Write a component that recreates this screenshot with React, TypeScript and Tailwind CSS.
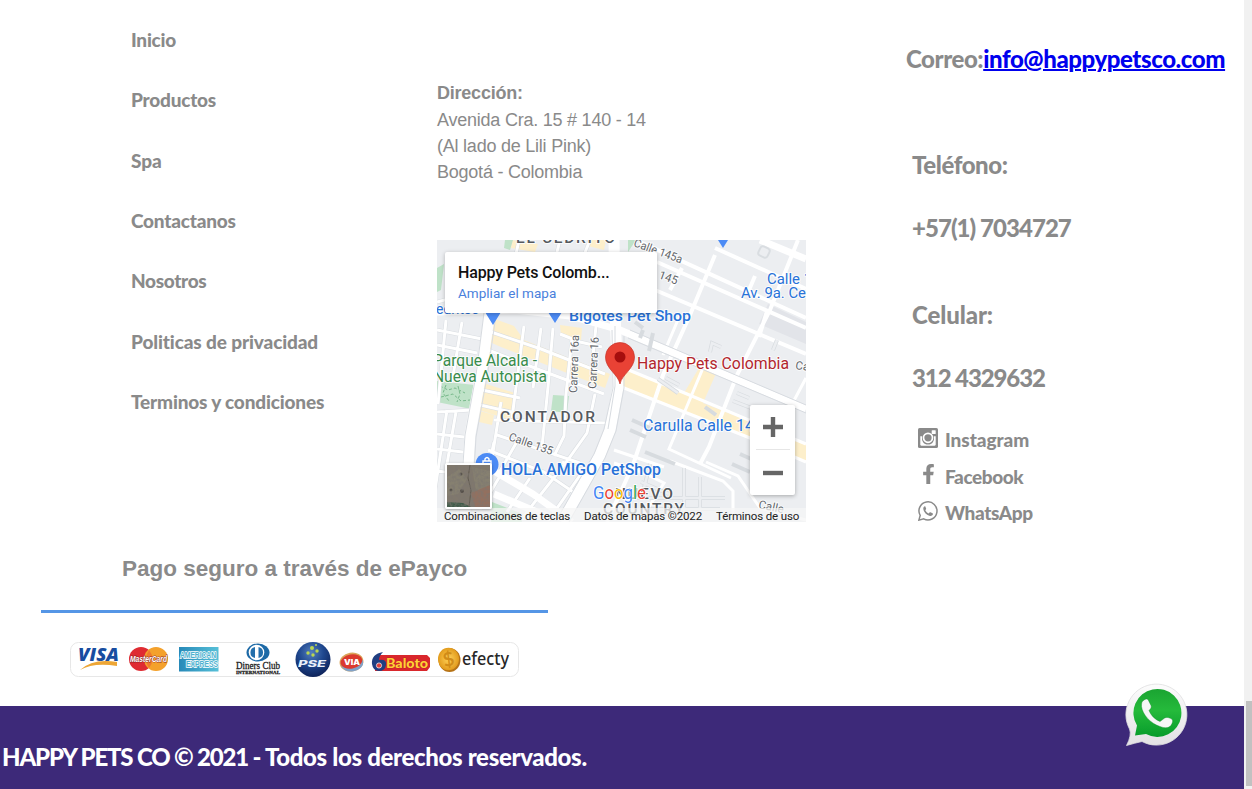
import React from "react";
import { FaFacebookF } from "react-icons/fa";

const links: { label: string; fit: string }[] = [
  { label: "Inicio", fit: "tracking-[-0.25px]" },
  { label: "Productos", fit: "tracking-[-0.22px]" },
  { label: "Spa", fit: "tracking-[-0.1px]" },
  { label: "Contactanos", fit: "tracking-[-0.22px]" },
  { label: "Nosotros", fit: "tracking-[-0.33px]" },
  { label: "Politicas de privacidad", fit: "tracking-[-0.12px]" },
  { label: "Terminos y condiciones", fit: "tracking-[-0.17px]" },
];

function InstagramIcon() {
  return (
    <svg viewBox="0 0 20 20" className="size-5" fill="none">
      <rect width="20" height="20" rx="1.6" fill="#8a8a8a" />
      <path d="M2.3 8.2v8.4c0 .7.4 1.1 1.1 1.1h13.2c.7 0 1.1-.4 1.1-1.1V8.2h-2.2a6 6 0 1 1-11 0z" fill="#fff" />
      <circle cx="10" cy="9.8" r="5.8" fill="#8a8a8a" />
      <circle cx="10" cy="9.8" r="4.5" stroke="#fff" strokeWidth="1.7" />
      <rect x="13.7" y="2.2" width="4" height="3.8" rx=".6" fill="#fff" />
    </svg>
  );
}

const handset =
  "M6.6 5.2c-.9.5-1.4 1.4-1.3 2.6.3 3.4 3.6 6.6 6.7 7.1 1.4.2 2.5-.5 2.9-1.7.1-.5 0-.8-.4-1l-2-.9c-.4-.2-.7-.1-1 .3l-.7.9c-1.5-.6-2.8-1.8-3.5-3.3l.7-.9c.2-.3.2-.6.1-.9l-.8-1.8c-.1-.4-.4-.5-.7-.4z";

function WhatsAppIcon() {
  return (
    <svg viewBox="0 0 20 20" className="size-5" fill="none">
      <path d="M.9 19.1l1.3-4.7a9 9 0 1 1 3.5 3.4z" stroke="#8a8a8a" strokeWidth="1.5" />
      <path d={handset} fill="#8a8a8a" />
    </svg>
  );
}

function StreetMap() {
  return (
    <svg viewBox="437 240 369 282" className="block h-full w-full" fontFamily="Roboto, sans-serif">
      <rect x="437" y="240" width="369" height="282" fill="#eceef1" />
      <g fill="#fdefcb">
        <path d="M492 318l22 8 10 14 86 34-5 14-104-41-16-7zM482 330l9 2 0 26-12-2zM483 383l32 10-5 27-31-10zM480 411l14 4-2 10-13-3zM512 240l26 4-3 8-24-4zM590 240l16 0-2 10-16-4zM560 325l22 3-1 12-20-4z" />
        <path d="M620 366l64 27 18-30 16 6-15 34 103 41v18l-122-50-66-25z" />
      </g>
      <path d="M437 268l7-4-3 26-4 2zM437 381l38 4-4 24-34-7zM553 395l16 1-2 17-16-2zM505 240h8l-3 10-6-2zM628 240h8l-8 12zM492 502l28 11 2 9h-31z" fill="#bfe2c8" />
      <path d="M440 386l8 4 7-2 10 5M441 397l12-3 8 7 9-1M446 385l-3 8 6 8M458 386l2 8-3 8" stroke="#78b98b" fill="none" strokeDasharray="3 2" />
      <path d="M768 304l38 18v22l-47-20z" fill="#e2e4e9" />
      <g stroke="#d9dde1" strokeWidth="4" fill="none">
        <path d="M437 330l45 9M446 320l-8 84M462 322l-10 60M437 345l40 8M491 332l50 17 64 25M488 350l52 20 64 24M524 326l-12 92M541 328l-8 60M553 328l-5 59-6 60M572 338l-6 56-2 42-10 20M560 334l20 8 22 5M596 326l-3 30M595 394l-8 39-20 28-44 56M482 390l38 8M480 405l36 8M519 240l-3 14M560 240l-4 16M590 240l-6 15M494 420l112 3M501 402l-9 56M497 435l83 28M494 442l-6 28M488 450l56 22 38 26M519 438l-20 35M562 462l21 9-35 50M437 412l35-2M447 410l-12 80M456 412l-9 52M437 434l36 4M437 449l34 4M437 471l30 4M500 476l-20 34M530 478l-23 34M437 302l15-4 0-40" />
      </g>
      <g stroke="#fff" strokeWidth="3" fill="none">
        <path d="M437 330l45 9M446 320l-8 84M462 322l-10 60M437 345l40 8M491 332l50 17 64 25M488 350l52 20 64 24M524 326l-12 92M541 328l-8 60M553 328l-5 59-6 60M572 338l-6 56-2 42-10 20M560 334l20 8 22 5M596 326l-3 30M595 394l-8 39-20 28-44 56M482 390l38 8M480 405l36 8M519 240l-3 14M560 240l-4 16M590 240l-6 15M494 420l112 3M501 402l-9 56M497 435l83 28M494 442l-6 28M488 450l56 22 38 26M519 438l-20 35M562 462l21 9-35 50M437 412l35-2M447 410l-12 80M456 412l-9 52M437 434l36 4M437 449l34 4M437 471l30 4M500 476l-20 34M530 478l-23 34M437 302l15-4 0-40" />
      </g>
      <g stroke="#fff" strokeWidth="4" fill="none">
        <path d="M657 262l149 66M640 242l166 76M655 290l151 64M715 248l91 41M798 240l-28 70-33 65-28 72-9 17M715 255l-25 60-27 60-30 90-26 57M682 268l-12 22M755 276l-6 14M767 311l-8 26" />
        <path d="M614 384l136 54 56 24M619 366l68 28 119 50M703 368l-34 81 30 14 32 15M614 450l50 17M680 315l-17 40M806 378l-24 45M614 463l30 10 20 10-24 38M670 461l53 20 10 10v29M706 462l32 14 22 32 46 12" strokeWidth="3" />
      </g>
      <g fill="none" stroke="#fff" strokeLinejoin="round">
        <path d="M490 310l-9 64-11 60-6 88" strokeWidth="11" />
        <path d="M437 312l78-2 55 6 50 14 186 79" strokeWidth="7" />
        <path d="M614 240l1 72 3 75-8 43-10 25-38 67" strokeWidth="11" />
        <path d="M760 240l46 19M489 468l44 26 39 28M494 494l55 23" strokeWidth="7" />
      </g>
      <g fill="none" stroke="#d7dbe0">
        <path d="M484 313l-8 62-11 60-6 86M496 315l-9 62-11 60-5 85M612 330l1 58-9 41-10 25-38 67M624 336l0 52-8 43-11 27-36 64M630 330l176 75M628 338l178 75" />
        <path d="M615 326l0 60-7 43" />
      </g>
      <g stroke="#d7dbdf" strokeWidth="4" fill="none">
        <path d="M658 379l20 14M666 378l13 7M635 322l8 6M640 338l3-8M710 352l2-9 9 4M773 350l4-10M653 333l-4 18M632 420l18 8M630 430l16 7M705 407l11 8M733 401l34 13M737 393l12 5M645 452l30 12M641 482l28 12M650 464l-8 32M684 468v50M700 477v41M637 498h88M650 509h70M732 464l18 8M740 454l18 8" />
      </g>
      <path d="M658 379l20 14M666 378l13 7M710 352l2-9 9 4M773 350l4-10M733 401l34 13M737 393l12 5M641 482l28 12M650 464l-8 32M684 468v50M700 477v41M637 498h88M650 509h70" stroke="#eceef1" strokeWidth="2.6" fill="none" />
      <rect x="759" y="247" width="10" height="10" rx="3" transform="rotate(25 764 252)" fill="none" stroke="#d9dde1" strokeWidth="2" />
      <g fill="#4c8bf5">
        <path d="M485 312h16l-8 13zM548 312h14l-7 11zM718 240h10l-5 8z" />
        <circle cx="487" cy="464.500" r="11.5" />
      </g>
      <path d="M483 461h8v8h-8zM485 461v-2q2-3 4 0v2" fill="none" stroke="#fff" strokeWidth="1.4" />
      <g stroke="#fff" strokeWidth="2" strokeOpacity=".8" paintOrder="stroke" strokeLinejoin="round">
        <g fill="#62666b" fontSize="11.5">
          <text x="633" y="246" transform="rotate(20 633 246)" textLength="51" lengthAdjust="spacingAndGlyphs">Calle 145a</text>
          <text x="658" y="278" transform="rotate(20 658 278)">145</text>
          <text x="577" y="393" transform="rotate(-88 577 393)" textLength="58" lengthAdjust="spacingAndGlyphs">Carrera 16a</text>
          <text x="596" y="389" transform="rotate(-87 596 389)" textLength="52" lengthAdjust="spacingAndGlyphs">Carrera 16</text>
          <text x="508" y="440" transform="rotate(19 508 440)" textLength="46" lengthAdjust="spacingAndGlyphs">Calle 135</text>
          <text x="758" y="508" transform="rotate(12 758 508)">Calle</text>
          <text x="795" y="369" transform="rotate(8 795 369)">Ca</text>
        </g>
        <g fill="#55595e" fontSize="15.500" fontWeight="500">
          <text x="516" y="243" textLength="99">EL CEDRITO</text>
          <text x="500" y="422" textLength="95">CONTADOR</text>
          <text x="615" y="499" textLength="58">NUEVO</text>
          <text x="603" y="514" textLength="81">COUNTRY</text>
        </g>
        <g fill="#2872d8" fontSize="15.500">
          <text x="767" y="284" fontSize="14.500" textLength="45" lengthAdjust="spacingAndGlyphs">Calle 1</text>
          <text x="741" y="298" fontSize="14.500" textLength="65" lengthAdjust="spacingAndGlyphs">Av. 9a. Ce</text>
          <text x="436" y="314" textLength="43" lengthAdjust="spacingAndGlyphs">edritos</text>
          <text x="569" y="321" fontWeight="500" textLength="122" lengthAdjust="spacingAndGlyphs">Bigotes Pet Shop</text>
          <text x="643" y="431" fontSize="16" textLength="111" lengthAdjust="spacingAndGlyphs">Carulla Calle 14</text>
          <text x="501" y="475" fontSize="16" fontWeight="500" textLength="160" lengthAdjust="spacingAndGlyphs">HOLA AMIGO PetShop</text>
        </g>
        <g fill="#398c4c" fontSize="16">
          <text x="433" y="366" textLength="104" lengthAdjust="spacingAndGlyphs">Parque Alcala -</text>
          <text x="433" y="382" textLength="114" lengthAdjust="spacingAndGlyphs">Nueva Autopista</text>
        </g>
        <text x="637" y="369" fill="#b3262d" fontSize="16.500" textLength="152" lengthAdjust="spacingAndGlyphs">Happy Pets Colombia</text>
      </g>
      <path d="M620 384c-2-10-14.500-15-14.500-27a14.500 14.500 0 0 1 29 0c0 12-12.500 17-14.500 27z" fill="#e94235" stroke="#c5362c" strokeWidth=".7" />
      <circle cx="620" cy="357" r="5.5" fill="#a50e0e" />
      <text x="593" y="499" fontSize="17.500" stroke="#fff" strokeWidth="1.6" paintOrder="stroke" textLength="53" lengthAdjust="spacingAndGlyphs">
        <tspan fill="#4285f4">G</tspan><tspan fill="#ea4335">o</tspan><tspan fill="#fbbc05">o</tspan><tspan fill="#4285f4">g</tspan><tspan fill="#34a853">l</tspan><tspan fill="#ea4335">e</tspan>
      </text>
    </svg>
  );
}

function SatelliteThumb() {
  return (
    <svg viewBox="0 0 43 42" className="block h-full w-full">
      <defs>
        <filter id="ground" x="0" y="0" width="1" height="1">
          <feTurbulence type="fractalNoise" baseFrequency=".35" numOctaves="3" seed="4" />
          <feColorMatrix values="0 0 0 0 .2  0 0 0 0 .18  0 0 0 0 .16  1.6 0 0 0 -.55" />
        </filter>
      </defs>
      <rect width="43" height="42" fill="#80786d" />
      <path d="M0 12l12-8 8 10-9 15-11 2zM25 2l18 4v16l-14 4z" fill="#868070" />
      <path d="M24 28l19-8v22H28z" fill="#93705f" />
      <path d="M0 37l16 1 8 4H0z" fill="#3f5b49" />
      <path d="M23 0l-2 13 3 12-2 17" stroke="#5f594f" fill="none" />
      <g fill="#55504a"><circle cx="14" cy="9" r="1.5" /><circle cx="15" cy="26" r="2" /><circle cx="4" cy="25" r="1.5" /></g>
      <rect width="43" height="42" filter="url(#ground)" />
    </svg>
  );
}

function MapCard() {
  return (
    <div className="relative h-[282px] w-[369px] overflow-hidden font-['Roboto',sans-serif]">
      <StreetMap />
      <div className="absolute top-[12px] left-[8px] h-[61px] w-[212px] rounded-[2px] bg-white pt-[10px] pl-[13px] shadow-[0_1px_4px_rgba(0,0,0,0.25)]">
        <div className="text-[16px] leading-[22px] font-medium tracking-[-0.17px] text-[#111]">Happy Pets Colomb...</div>
        <div className="text-[13.5px] leading-[19px] tracking-[0.02px] text-[#4a7fdc]">Ampliar el mapa</div>
      </div>
      <div className="absolute top-[165px] left-[313px] flex h-[90px] w-[45px] flex-col items-center rounded-[2px] bg-white shadow-[0_1px_4px_rgba(0,0,0,0.3)]">
        <div className="flex h-[44px] items-center">
          <svg viewBox="0 0 20 20" className="size-5"><path d="M10 0v20M0 10h20" stroke="#666" strokeWidth="4.4" /></svg>
        </div>
        <div className="h-px w-[34px] bg-[#e6e6e6]" />
        <div className="flex h-[46px] items-center">
          <svg viewBox="0 0 20 20" className="size-5"><path d="M0 10h20" stroke="#666" strokeWidth="4.4" /></svg>
        </div>
      </div>
      <div className="absolute bottom-0 left-0 flex h-[14px] w-full items-center gap-[13px] bg-[#f5f5f5]/75 pt-px pl-[7px] text-[11.5px] leading-[14px] whitespace-nowrap text-[#222]">
        <span className="w-[127px] tracking-[-0.12px]">Combinaciones de teclas</span>
        <span className="w-[119px] tracking-[-0.15px]">Datos de mapas ©2022</span>
        <span className="tracking-[-0.13px]">Términos de uso</span>
      </div>
      <div className="absolute top-[223px] left-[8px] h-[46px] w-[47px] rounded-[2px] border-2 border-white shadow-[0_1px_3px_rgba(0,0,0,0.35)]">
        <SatelliteThumb />
      </div>
    </div>
  );
}

function PaymentLogos() {
  return (
    <svg viewBox="70 642 449 35" className="block h-[35px] w-[449px]">
      <defs>
        <linearGradient id="amex" x1="0" x2="1"><stop stopColor="#2789b8" /><stop offset="1" stopColor="#57c0d8" /></linearGradient>
        <radialGradient id="pse" cx=".45" cy=".3" r=".7"><stop stopColor="#547fbd" /><stop offset=".5" stopColor="#1f488f" /><stop offset="1" stopColor="#0e235a" /></radialGradient>
        <radialGradient id="coin"><stop stopColor="#ffd259" /><stop offset="1" stopColor="#e29b1c" /></radialGradient>
      </defs>
      <rect x="70.5" y="642.5" width="448" height="34" rx="8" fill="#fff" stroke="#e7e7e7" />
      <text x="78" y="661" fontFamily="Open Sans, sans-serif" fontSize="18" fontWeight="800" fontStyle="italic" fill="#184da0" textLength="41" lengthAdjust="spacingAndGlyphs">VISA</text>
      <path d="M80 670q13-12 37-8v4q-23-4-37 4z" fill="#eda635" />
      <circle cx="141" cy="659" r="12" fill="#df2b32" />
      <circle cx="156" cy="659" r="12" fill="#f4a12c" />
      <path d="M149 650q7 9 0 18-6-9 0-18z" fill="#ef7a2d" />
      <text x="130" y="662" fontFamily="Liberation Sans, sans-serif" fontSize="8.500" fontWeight="700" fontStyle="italic" fill="#fff" stroke="#8c2625" strokeWidth=".9" paintOrder="stroke" textLength="37" lengthAdjust="spacingAndGlyphs">MasterCard</text>
      <rect x="179" y="647" width="39.5" height="24.5" fill="url(#amex)" />
      <g fontFamily="Liberation Sans, sans-serif" fontSize="8.500" fontWeight="700" fill="#4bb1cf" stroke="#fff" strokeWidth="1.4" paintOrder="stroke">
        <text x="180" y="658" textLength="36" lengthAdjust="spacingAndGlyphs">AMERICAN</text>
        <text x="186" y="667" textLength="32" lengthAdjust="spacingAndGlyphs">EXPRESS</text>
      </g>
      <ellipse cx="258" cy="652.5" rx="11.5" ry="9" fill="#1c69a6" />
      <circle cx="256.5" cy="652.5" r="7.8" fill="#fff" />
      <path d="M255 647v11a5.6 5.6 0 0 1 0-11zm3.5 0v11a5.6 5.6 0 0 0 0-11z" fill="#246fab" />
      <text x="236" y="669" fontFamily="Liberation Serif, serif" fontSize="10" fill="#222" stroke="#222" strokeWidth=".3" textLength="44" lengthAdjust="spacingAndGlyphs">Diners Club</text>
      <text x="236" y="674" fontFamily="Liberation Serif, serif" fontSize="5" fontWeight="700" fill="#222" stroke="#222" strokeWidth=".3" textLength="44">INTERNATIONAL</text>
      <circle cx="313" cy="659.5" r="17.5" fill="url(#pse)" />
      <g fill="#b9d651"><circle cx="312" cy="648" r="2" /><circle cx="308" cy="653" r="1.7" /><circle cx="317" cy="651" r="1.7" /><circle cx="313" cy="655" r="1.7" /><circle cx="316" cy="645" r="1" /></g>
      <text x="298" y="667" fontFamily="Inter, sans-serif" fontSize="9.5" fontWeight="800" fontStyle="italic" fill="#e8eff9" textLength="28" lengthAdjust="spacingAndGlyphs">PSE</text>
      <g transform="rotate(-10 351.500 662)">
        <ellipse cx="351.500" cy="662" rx="12" ry="9.500" fill="#dba65a" />
        <ellipse cx="352" cy="664" rx="11" ry="7.500" fill="#81a2c7" />
        <ellipse cx="351.500" cy="661.500" rx="11" ry="7" fill="#db3a2e" />
      </g>
      <text x="344" y="665" fontFamily="Inter, sans-serif" fontSize="7.500" fontWeight="900" fill="#fff" textLength="16" lengthAdjust="spacingAndGlyphs">VIA</text>
      <path d="M376 655h51l3 3v9l-3 4h-52z" fill="#d9272c" />
      <path d="M383 652q-12 2-11 12 1 7 7 7t7-6-7-5q0-4 4-8z" fill="#203f81" />
      <circle cx="379" cy="665.500" r="2.600" fill="#dc403c" stroke="#fff" strokeWidth=".7" />
      <text x="386" y="668" fontFamily="Lato, sans-serif" fontSize="13.500" fontWeight="900" fill="#ffd035" stroke="#a41e22" strokeWidth=".5" paintOrder="stroke" textLength="42" lengthAdjust="spacingAndGlyphs">Baloto</text>
      <ellipse cx="449.500" cy="660" rx="11" ry="12" fill="#b67317" />
      <ellipse cx="448.500" cy="659" rx="10.500" ry="11.300" fill="url(#coin)" />
      <text x="443" y="666" fontFamily="Lato, sans-serif" fontSize="19" fontWeight="700" fill="#d18c17" transform="rotate(-12 449 660)">$</text>
      <text x="462" y="665" fontFamily="Noto Sans, sans-serif" fontSize="18" fontWeight="500" fill="#272727" textLength="47" lengthAdjust="spacingAndGlyphs">efecty</text>
    </svg>
  );
}

function WhatsAppBubble() {
  return (
    <svg viewBox="0 0 66 66" className="h-[66px] w-[66px]">
      <defs>
        <linearGradient id="bubble" x1="0" y1="0" x2="0" y2="1"><stop stopColor="#fcfcfc" /><stop offset="1" stopColor="#e3e1e5" /></linearGradient>
        <linearGradient id="leaf" x1="0" y1="0" x2="0" y2="1"><stop stopColor="#1ba432" /><stop offset=".45" stopColor="#25ba3b" /><stop offset="1" stopColor="#079c2b" /></linearGradient>
      </defs>
      <path d="M3.500 63.500Q9 53 6.500 47A30.500 30.500 0 1 1 19 59.500Q12 61 3.500 63.500z" fill="url(#bubble)" stroke="#dededf" strokeWidth=".8" strokeLinejoin="round" />
      <path d="M12 53.500l2-10a24 24 0 1 1 9 8.500z" fill="url(#leaf)" />
      <path d="M20.500 18.500c2-2 4-2 5 0l2.500 5c1 2-1 4-2 5 2 5 6 9 11 11l4-3c1-1 2-1 4-1l3 1c2 1 2 3 1 5-2 5-7 5-12 3-9.500-3-17.500-12-18.500-20 0-3 0-5 2-6z" fill="#f7f7f7" stroke="#138b2c" strokeOpacity=".4" />
    </svg>
  );
}

export default function App() {
  return (
    <div className="flex h-[789px] w-[1252px] overflow-hidden bg-white text-[#8a8a8a]">
      <div className="relative flex w-[1244px] flex-col">
        <main className="h-[706px]">
          <section className="flex h-[541px]">
            <nav className="flex w-[437px] flex-col gap-[36.45px] pt-[27.7px] pl-[131px] font-['Lato',sans-serif] text-[19px] leading-6 font-black whitespace-nowrap">
              {links.map((l) => (
                <a key={l.label} className={l.fit}>{l.label}</a>
              ))}
            </nav>
            <div className="w-[469px] pt-[80px] font-['Liberation_Sans',sans-serif] text-[18px] leading-[26.2px] tracking-[-0.23px]">
              <p className="pb-[0.6px] font-bold">Dirección:</p>
              <p>Avenida Cra. 15 # 140 - 14</p>
              <p>(Al lado de Lili Pink)</p>
              <p>Bogotá - Colombia</p>
              <div className="pt-[55px] tracking-normal"><MapCard /></div>
            </div>
            <div className="pt-[43px] font-['Lato',sans-serif] text-[24px] leading-8 font-black whitespace-nowrap">
              <p className="tracking-[-0.43px]">Correo:<a className="text-[#0000ee] underline decoration-2">info@happypetsco.com</a></p>
              <div className="pt-[74px] pl-[6px]">
                <p className="tracking-[-0.4px]">Teléfono:</p>
                <p className="pt-[31px] tracking-[-0.95px]">+57(1) 7034727</p>
                <p className="pt-[55px] tracking-[-0.1px]">Celular:</p>
                <p className="pt-[31px] tracking-[-1.1px]">312 4329632</p>
                <ul className="flex flex-col gap-[12.5px] pt-[34px] pl-[6px] text-[19px] leading-6">
                  <li className="flex gap-[7px] tracking-[-0.05px]"><InstagramIcon />Instagram</li>
                  <li className="flex gap-[7px] tracking-[-0.42px]"><span className="flex w-5 justify-center"><FaFacebookF className="-mt-px h-5 w-[13px]" /></span>Facebook</li>
                  <li className="flex gap-[7px] tracking-[-0.38px]"><WhatsAppIcon />WhatsApp</li>
                </ul>
              </div>
            </div>
          </section>
          <section className="ml-[41px] w-[507px]">
            <h2 className="h-[72px] border-b-3 border-[#5596e6] pt-[12px] pl-[81px] font-['Liberation_Sans',sans-serif] text-[22.5px] leading-8 font-bold whitespace-nowrap">Pago seguro a través de ePayco</h2>
            <div className="pt-[29px] pl-[29px]"><PaymentLogos /></div>
          </section>
        </main>
        <footer className="flex-1 bg-[#3d2979] pt-[35px] pl-[2px] font-['Lato',sans-serif] text-[24px] leading-8 font-black text-white">
          <p className="tracking-[-0.34px]"><span className="tracking-[-1.17px]">HAPPY PETS CO © 2021 - </span>Todos los derechos reservados.</p>
        </footer>
        <a className="absolute right-[55px] bottom-[41px]"><WhatsAppBubble /></a>
      </div>
      <div className="flex w-2 flex-col items-end bg-[#f1f1f1] pt-[701px]">
        <div className="h-[85px] w-1.5 bg-[#c1c1c1]" />
      </div>
    </div>
  );
}
